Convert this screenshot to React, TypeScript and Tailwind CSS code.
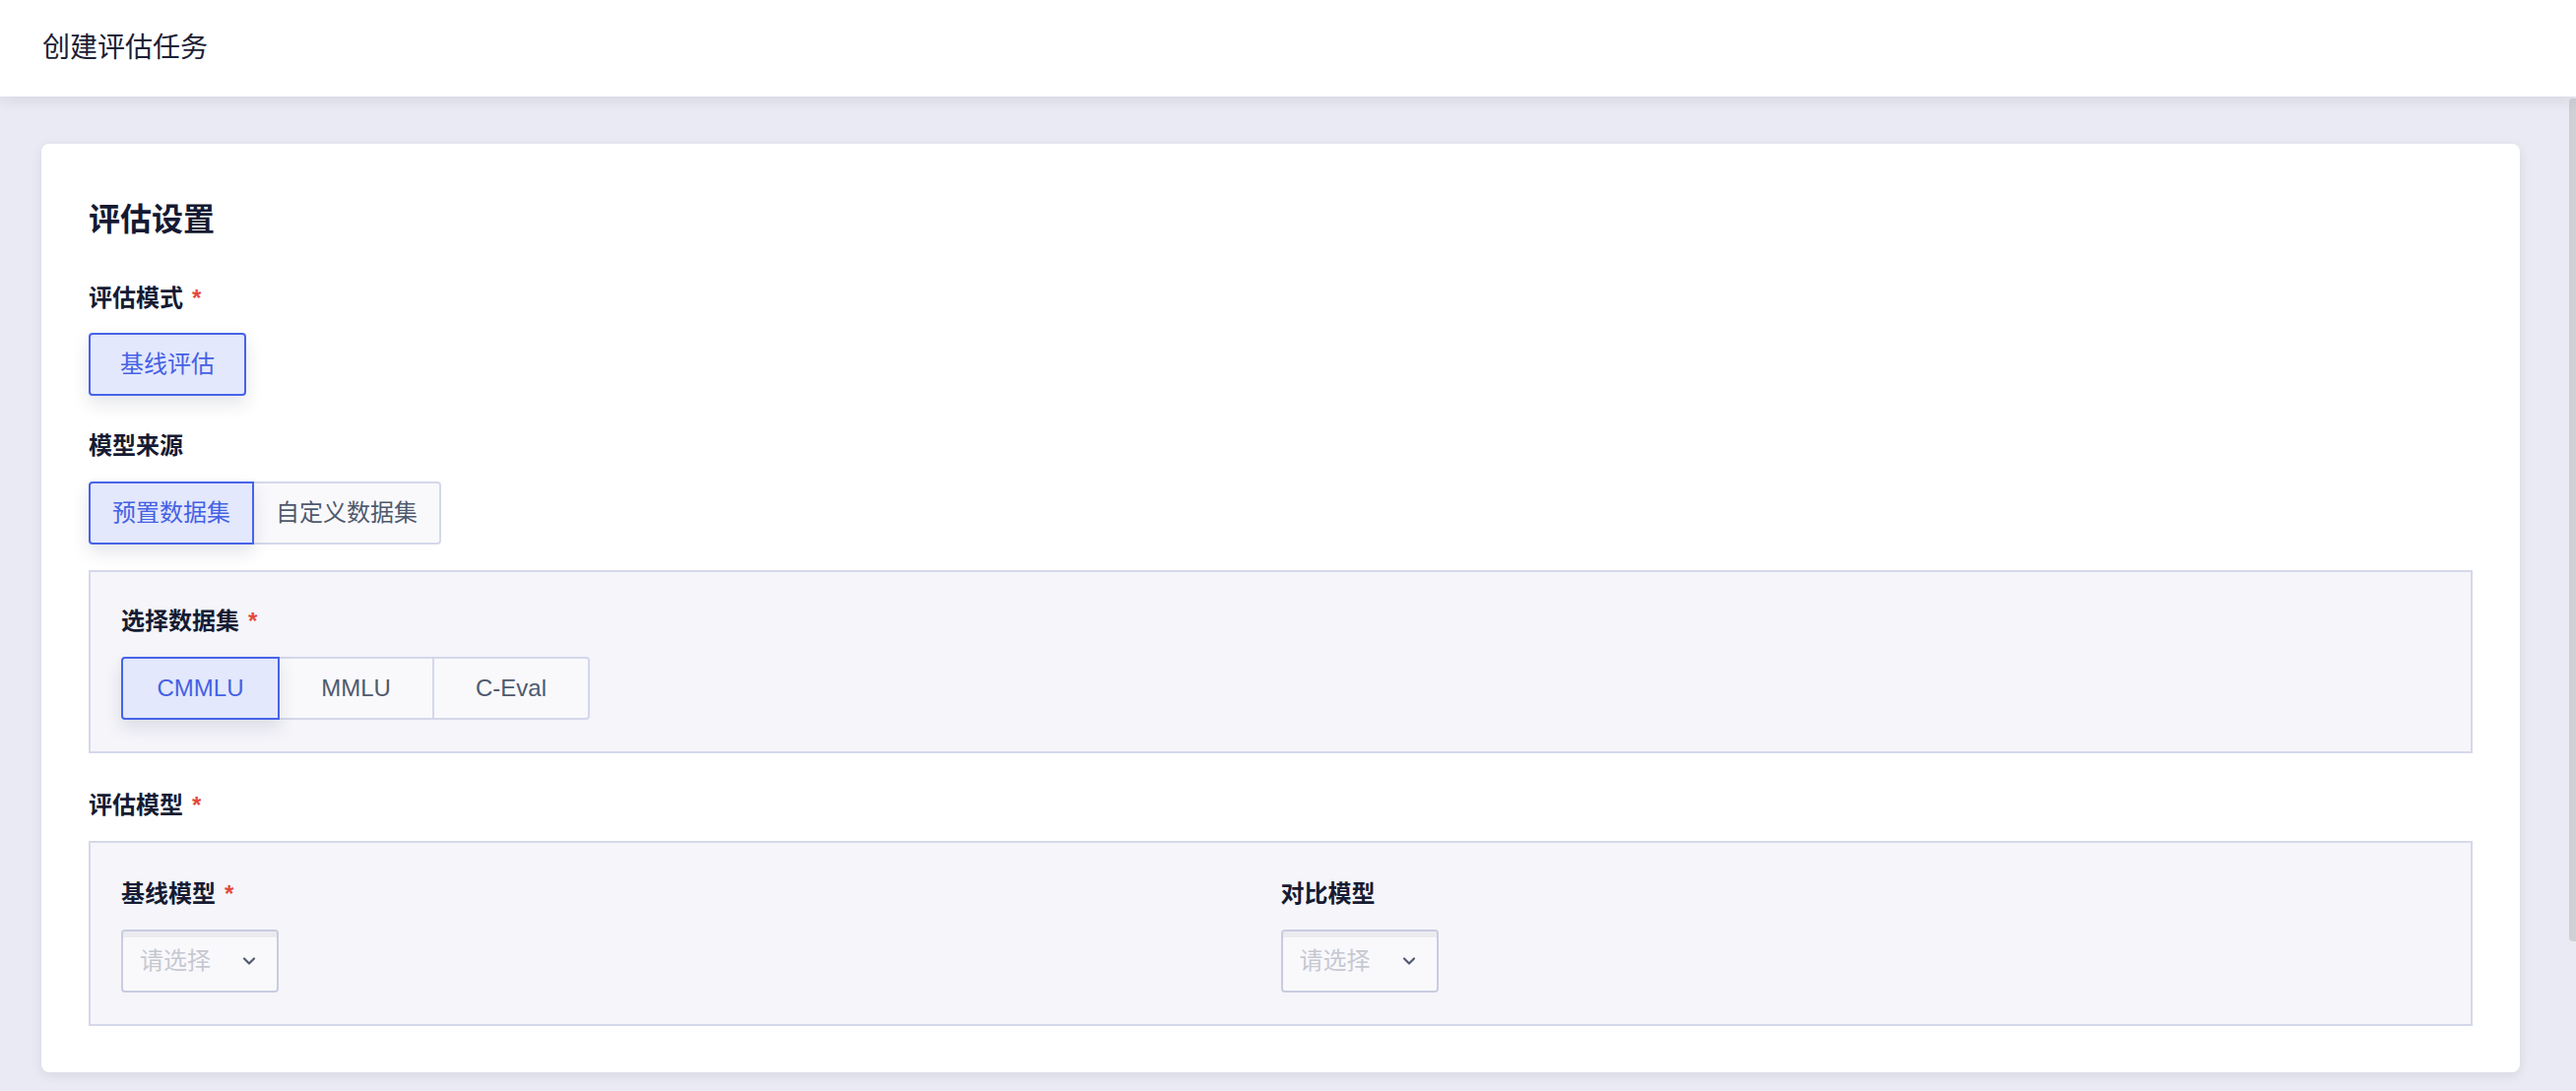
import { ChevronDown } from 'lucide-react';

const labelCls = "text-[24px] leading-[34px] font-bold text-[#161b33]";

function Label({ text, required }: { text: string; required?: boolean }) {
  return (
    <div className={labelCls}>
      {text}
      {required && <span className="ml-[9px] text-[#e4483b]">*</span>}
    </div>
  );
}

interface SegOption {
  label: string;
  width?: string;
}

function Segmented({ options, selected, itemCls }: { options: SegOption[]; selected: number; itemCls: string }) {
  return (
    <div className="flex">
      {options.map((opt, i) => {
        const active = i === selected;
        const first = i === 0;
        const last = i === options.length - 1;
        return (
          <div
            key={opt.label}
            className={[
              "flex h-[64px] items-center justify-center border-2 text-[24px] leading-[32px]",
              itemCls,
              opt.width ?? "",
              first ? "rounded-l-[4px]" : "-ml-[2px]",
              last ? "rounded-r-[4px]" : "",
              active
                ? "relative z-10 border-[#4763e9] bg-[#e3e8fc] text-[#4561e4] shadow-[0_8px_18px_rgba(30,40,80,0.12)]"
                : "border-[#d4d7ea] bg-[#f9f9fc] text-[#4f596d]",
            ].join(" ")}
          >
            {opt.label}
          </div>
        );
      })}
    </div>
  );
}

function SelectBox() {
  return (
    <div className="flex h-[64px] w-[160px] items-center justify-between rounded-[4px] border-2 border-[#c9cce0] bg-[#f9f9fc] pl-[17px] pr-[18px] shadow-[inset_0_6px_0_0_#ebebef]">
      <span className="text-[24px] leading-[32px] text-[#c6c8d1]">请选择</span>
      <ChevronDown className="h-[20px] w-[20px] text-[#515a6e]" strokeWidth={2.6} />
    </div>
  );
}

export default function App() {
  return (
    <div className="flex h-[1108px] flex-col overflow-hidden bg-[#e9eaf3] font-['Liberation_Sans','Noto_Sans_CJK_SC',sans-serif]">
      {/* Header */}
      <div className="relative z-10 flex h-[98px] shrink-0 items-center bg-white px-[43px] shadow-[0_4px_14px_rgba(20,25,60,0.09)]">
        <h1 className="text-[28px] leading-[36px] text-[#1b2035]">创建评估任务</h1>
      </div>

      <div className="flex flex-1">
        {/* Main content */}
        <div className="flex-1 px-[42px] pt-[48px]">
          <div className="rounded-[8px] bg-white px-[48px] pb-[47px] pt-[56px] shadow-[0_3px_12px_rgba(20,25,60,0.09)]">
            <h2 className="text-[32px] leading-[42px] font-bold text-[#141a33]">评估设置</h2>

            <div className="mt-[42px]">
              <Label text="评估模式" required />
            </div>
            <div className="mt-[18px] flex">
              <Segmented options={[{ label: "基线评估" }]} selected={0} itemCls="px-[30px]" />
            </div>

            <div className="mt-[34px]">
              <Label text="模型来源" />
            </div>
            <div className="mt-[19px]">
              <Segmented
                options={[{ label: "预置数据集" }, { label: "自定义数据集" }]}
                selected={0}
                itemCls="px-[22px]"
              />
            </div>

            {/* Dataset box */}
            <div className="mt-[26px] border-2 border-[#d5d8ea] bg-[#f5f5fa] px-[31px] pb-[32px] pt-[33px]">
              <Label text="选择数据集" required />
              <div className="mt-[19px]">
                <Segmented
                  options={[
                    { label: "CMMLU", width: "w-[161px]" },
                    { label: "MMLU", width: "w-[159px]" },
                    { label: "C-Eval", width: "w-[160px]" },
                  ]}
                  selected={0}
                  itemCls=""
                />
              </div>
            </div>

            <div className="mt-[36px]">
              <Label text="评估模型" required />
            </div>

            {/* Model box */}
            <div className="mt-[19px] grid grid-cols-2 border-2 border-[#d5d8ea] bg-[#f5f5fa] px-[31px] pb-[32px] pt-[35px]">
              <div>
                <Label text="基线模型" required />
                <div className="mt-[19px]">
                  <SelectBox />
                </div>
              </div>
              <div>
                <Label text="对比模型" />
                <div className="mt-[19px]">
                  <SelectBox />
                </div>
              </div>
            </div>
          </div>
        </div>

        {/* Scrollbar */}
        <div className="flex w-[15px] justify-end pt-[2px]">
          <div className="h-[856px] w-[7px] rounded-l-[4px] bg-[#cfcfd6]" />
        </div>
      </div>
    </div>
  );
}
